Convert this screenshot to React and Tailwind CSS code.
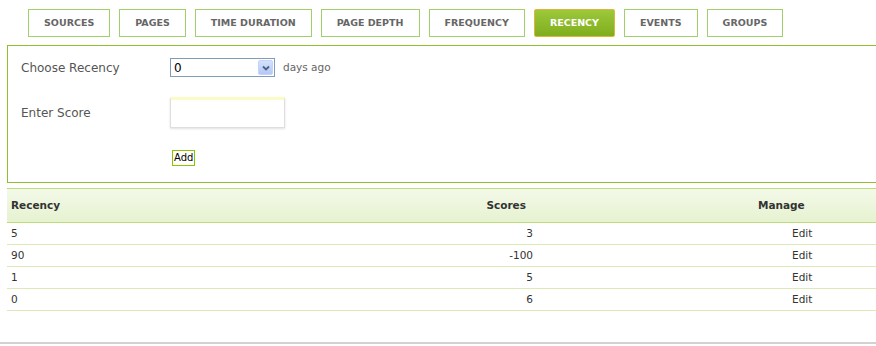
const TABS = ['SOURCES', 'PAGES', 'TIME DURATION', 'PAGE DEPTH', 'FREQUENCY', 'RECENCY', 'EVENTS', 'GROUPS'];

const ROWS = [
  { recency: '5', score: '3' },
  { recency: '90', score: '-100' },
  { recency: '1', score: '5' },
  { recency: '0', score: '6' },
];

function Tab({ label, active }) {
  if (active) {
    return (
      <div className="h-[28px] px-[15px] flex items-center rounded-[2px] border border-[#e3b33c] bg-gradient-to-b from-[#9cc83a] to-[#7fae1c] text-white text-[9.5px] font-bold">
        {label}
      </div>
    );
  }
  return (
    <div className="h-[28px] px-[15px] flex items-center border border-[#9fd06a] bg-white text-[#666] text-[9.5px] font-bold">
      {label}
    </div>
  );
}

export default function App() {
  return (
    <div className="w-[876px] h-[346px] overflow-hidden bg-white font-['DejaVu_Sans',Verdana,sans-serif]">
      {/* Tabs */}
      <div className="flex gap-[9px] pl-[28px] pt-[9px]">
        {TABS.map((t) => (
          <Tab key={t} label={t} active={t === 'RECENCY'} />
        ))}
      </div>

      {/* Form panel */}
      <div className="mt-[8px] ml-[7px] h-[138px] border-l border-t border-b border-[#8fbf2c] pl-[13px] pt-[12px]">
        <div className="flex items-center h-[19px]">
          <span className="w-[149px] text-[12px] text-[#555]">Choose Recency</span>
          <div className="w-[105px] h-[19px] border border-[#7f9db9] bg-white flex items-center justify-between pl-[3px] pr-[1px]">
            <span className="text-[12px] text-black leading-none">0</span>
            <div className="w-[15px] h-[15px] rounded-[2px] bg-gradient-to-b from-[#d4e1fc] to-[#b4c8f6] border border-[#c3d3fd] flex items-center justify-center">
              <svg width="8" height="6" viewBox="0 0 8 6">
                <path d="M1 1.5 L4 4.5 L7 1.5" fill="none" stroke="#4d6185" strokeWidth="1.8" />
              </svg>
            </div>
          </div>
          <span className="ml-[8px] text-[10.5px] text-[#666]">days ago</span>
        </div>

        <div className="flex items-center mt-[20px] h-[31px]">
          <span className="w-[149px] text-[12px] text-[#555]">Enter Score</span>
          <div className="w-[115px] h-[31px] border border-[#dedede] border-t-[3px] border-t-[#fbfbc8] bg-white shadow-[0_1px_2px_rgba(0,0,0,0.12)]" />
        </div>

        <div className="mt-[16px] pl-[151px]">
          <div className="inline-flex items-center h-[16px] px-[1px] border border-[#8cc400] text-[10px] text-black">
            Add
          </div>
        </div>
      </div>

      {/* Table */}
      <div className="mt-[5px] ml-[7px] text-[10.5px] text-[#333]">
        <div className="flex items-center h-[35px] border-t border-b border-[#bedd7a] bg-gradient-to-b from-[#f3f9e8] to-[#e6f2d1] font-bold">
          <div className="w-[433px] pl-[4px]">Recency</div>
          <div className="w-[86px] text-right">Scores</div>
          <div className="pl-[232px]">Manage</div>
        </div>
        {ROWS.map((r, i) => (
          <div key={i} className="flex items-center h-[22px] border-b border-[#dde9b6]">
            <div className="w-[433px] pl-[4px]">{r.recency}</div>
            <div className="w-[93px] text-right">{r.score}</div>
            <div className="pl-[259px]">Edit</div>
          </div>
        ))}
      </div>

      <div className="mt-[31px] h-[2px] bg-[#d2d2d2]" />
    </div>
  );
}
